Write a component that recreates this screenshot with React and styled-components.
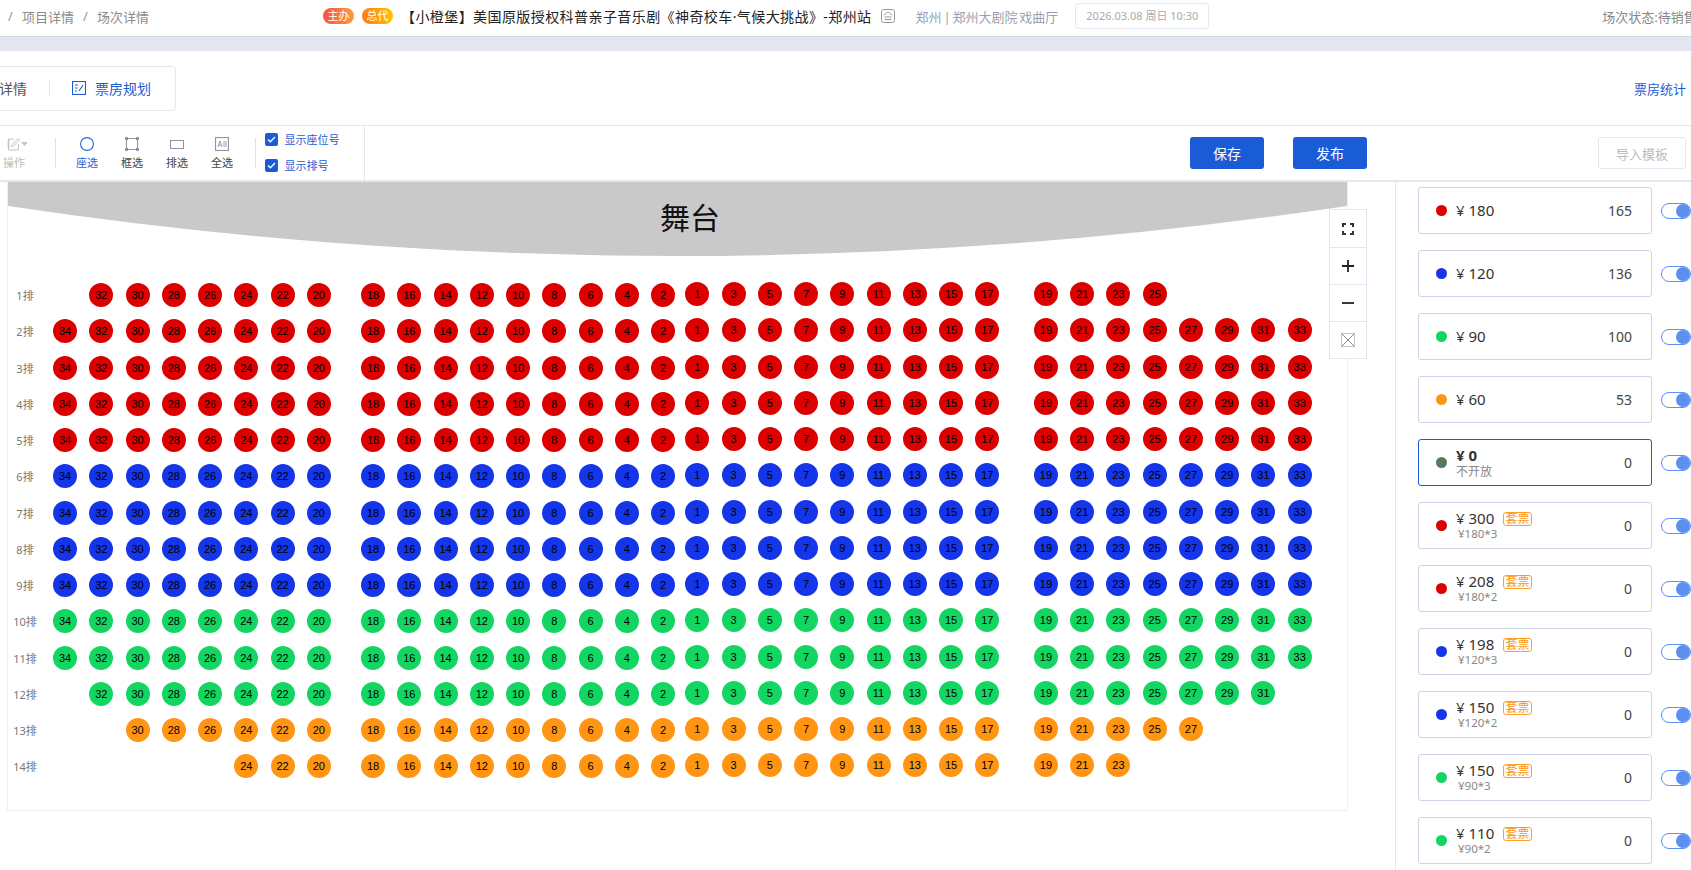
import React from 'react';
import styled, { createGlobalStyle } from 'styled-components';

const RED = '#dc0000';
const BLUE = '#1535e8';
const GREEN = '#13d662';
const ORANGE = '#ff9512';
const MUTED = '#567a60';
const PRIMARY = '#1a5cd6';
const LINE = '#e4e7f1';

const GlobalStyle = createGlobalStyle`
  html, body {
    margin: 0;
    padding: 0;
    background: #fff;
    overflow: hidden;
  }
  * { box-sizing: border-box; }
  body {
    font-family: "Noto Sans", "Noto Sans CJK SC", sans-serif;
    color: #333;
  }
`;

const evens = (from, to) => {
  const out = [];
  for (let n = from; n >= to; n -= 2) out.push(n);
  return out;
};
const odds = (from, to) => {
  const out = [];
  for (let n = from; n <= to; n += 2) out.push(n);
  return out;
};

const rowColor = (row) => {
  if (row <= 5) return RED;
  if (row <= 9) return BLUE;
  if (row <= 12) return GREEN;
  return ORANGE;
};

// first seat of the left block and last seat of the right block, per row
const rows = [
  { no: 1, first: 32, last: 25 },
  { no: 2, first: 34, last: 33 },
  { no: 3, first: 34, last: 33 },
  { no: 4, first: 34, last: 33 },
  { no: 5, first: 34, last: 33 },
  { no: 6, first: 34, last: 33 },
  { no: 7, first: 34, last: 33 },
  { no: 8, first: 34, last: 33 },
  { no: 9, first: 34, last: 33 },
  { no: 10, first: 34, last: 33 },
  { no: 11, first: 34, last: 33 },
  { no: 12, first: 32, last: 31 },
  { no: 13, first: 30, last: 27 },
  { no: 14, first: 24, last: 23 },
];

const prices = [
  { color: RED, price: '180', count: 165 },
  { color: BLUE, price: '120', count: 136 },
  { color: GREEN, price: '90', count: 100 },
  { color: ORANGE, price: '60', count: 53 },
  { color: MUTED, price: '0', count: 0, note: '不开放', active: true },
  { color: RED, price: '300', count: 0, pack: '¥180*3' },
  { color: RED, price: '208', count: 0, pack: '¥180*2' },
  { color: BLUE, price: '198', count: 0, pack: '¥120*3' },
  { color: BLUE, price: '150', count: 0, pack: '¥120*2' },
  { color: GREEN, price: '150', count: 0, pack: '¥90*3' },
  { color: GREEN, price: '110', count: 0, pack: '¥90*2' },
];

export default function App() {
  return (
    <Page>
      <GlobalStyle />
      <Header>
        <Crumbs>
          <Slash>/</Slash>
          <span>项目详情</span>
          <Slash>/</Slash>
          <span>场次详情</span>
        </Crumbs>
        <Badge $from="#f0553f" $to="#ff9a3c">主办</Badge>
        <Badge $from="#ff7a12" $to="#ffc400">总代</Badge>
        <Title>【小橙堡】美国原版授权科普亲子音乐剧《神奇校车·气候大挑战》-郑州站</Title>
        <PosterIcon viewBox="0 0 14 14">
          <rect x="0.5" y="0.5" width="13" height="13" rx="2" />
          <path d="M3 6l4-3 4 3M3.5 8h7M3.5 10.5h7" />
        </PosterIcon>
        <Venue>郑州 | 郑州大剧院 戏曲厅</Venue>
        <DateBox>2026.03.08 周日 10:30</DateBox>
        <Status>场次状态:待销售</Status>
      </Header>
      <Band />
      <TabBar>
        <TabCard>
          <TabPlain>详情</TabPlain>
          <TabDivider />
          <TabActive>
            <svg width="14" height="14" viewBox="0 0 14 14" fill="none" stroke={PRIMARY} strokeWidth="1.1">
              <rect x="0.5" y="0.5" width="13" height="13" />
              <path d="M3 4h3M3 7h2.5M3 10h2M7 10l4-6" />
            </svg>
            票房规划
          </TabActive>
        </TabCard>
        <StatLink>票房统计</StatLink>
      </TabBar>
      <Toolbar>
        <ToolSection>
          <OpTool>
            <svg width="26" height="14" viewBox="0 0 26 14" fill="none" stroke="#c4c4c4">
              <path d="M13 2H7.5v11h10V7M10 9l7-7.5 1.5 1.5-7 7zM6 4h3M6 7h3M6 10h3" />
              <path d="M21 5h7l-3.5 4z" fill="#c4c4c4" stroke="none" transform="translate(-1)" />
            </svg>
            <span>操作</span>
          </OpTool>
          <ToolDivider $left={27} />
          <Tool $active>
            <svg width="14" height="14" viewBox="0 0 14 14" fill="none" stroke="#2a62d8" strokeWidth="1.1">
              <circle cx="7" cy="7" r="6.4" />
            </svg>
            <span>座选</span>
          </Tool>
          <Tool>
            <svg width="14" height="14" viewBox="0 0 14 14" fill="none" stroke="#8f94a3">
              <rect x="1.5" y="1.5" width="11" height="11" />
              <path d="M0 0h3v3H0zM11 0h3v3h-3zM0 11h3v3H0zM11 11h3v3h-3z" fill="#8f94a3" stroke="none" />
            </svg>
            <span>框选</span>
          </Tool>
          <Tool>
            <svg width="14" height="14" viewBox="0 0 14 14" fill="none" stroke="#8f94a3">
              <rect x="0.5" y="3.5" width="13" height="8" />
            </svg>
            <span>排选</span>
          </Tool>
          <Tool>
            <svg width="14" height="14" viewBox="0 0 14 14" fill="none" stroke="#8f94a3">
              <rect x="0.5" y="0.5" width="13" height="13" strokeWidth="1.2" />
              <path d="M3 10l2-6 2 6M3.8 8h2.4M9 4v6M11 4v6" strokeWidth="0.9" />
            </svg>
            <span>全选</span>
          </Tool>
          <ToolDivider $left={10.5} />
          <Checks>
            <CheckRow>
              <CheckBox>
                <svg width="9" height="7" viewBox="0 0 9 7" fill="none" stroke="#fff" strokeWidth="1.3">
                  <path d="M1 3.5l2.3 2.3L8 1" />
                </svg>
              </CheckBox>
              显示座位号
            </CheckRow>
            <CheckRow>
              <CheckBox>
                <svg width="9" height="7" viewBox="0 0 9 7" fill="none" stroke="#fff" strokeWidth="1.3">
                  <path d="M1 3.5l2.3 2.3L8 1" />
                </svg>
              </CheckBox>
              显示排号
            </CheckRow>
          </Checks>
        </ToolSection>
        <SaveButton>保存</SaveButton>
        <PublishButton>发布</PublishButton>
        <ImportButton>导入模板</ImportButton>
      </Toolbar>
      <Body>
        <Main>
          <Hall>
            <Stage>
              <StageShape viewBox="0 0 1339 74" preserveAspectRatio="none">
                <path d="M0 0H1339V24Q669.5 124 0 24Z" fill="#c9c9c9" />
              </StageShape>
              <StageName>舞台</StageName>
            </Stage>
            <ZoomTools>
              <ZoomCell>
                <svg width="12" height="12" viewBox="0 0 12 12" fill="none" stroke="#333" strokeWidth="2">
                  <path d="M1 4V1h3M8 1h3v3M11 8v3H8M4 11H1V8" />
                </svg>
              </ZoomCell>
              <ZoomCell>
                <svg width="12" height="12" viewBox="0 0 12 12" fill="none" stroke="#222" strokeWidth="1.8">
                  <path d="M0 6h12M6 0v12" />
                </svg>
              </ZoomCell>
              <ZoomCell>
                <svg width="12" height="12" viewBox="0 0 12 12" fill="none" stroke="#222" strokeWidth="1.8">
                  <path d="M0 6h12" />
                </svg>
              </ZoomCell>
              <ZoomCell>
                <svg width="14" height="14" viewBox="0 0 14 14" fill="none" stroke="#888">
                  <rect x="0.5" y="0.5" width="13" height="13" strokeDasharray="1 1" />
                  <path d="M1 1l12 12M13 1L1 13" />
                </svg>
              </ZoomCell>
            </ZoomTools>
            <SeatMap>
              {rows.map((r) => {
                const color = rowColor(r.no);
                return (
                  <Row key={r.no}>
                    <RowLabel>{r.no}排</RowLabel>
                    <LeftWing>
                      {evens(34, 20).map((n) => (
                        <Cell key={n}>{n <= r.first && <Seat $color={color}>{n}</Seat>}</Cell>
                      ))}
                    </LeftWing>
                    <CenterLeft>
                      {evens(18, 2).map((n) => (
                        <Cell key={n}><Seat $color={color}>{n}</Seat></Cell>
                      ))}
                    </CenterLeft>
                    <CenterRight>
                      {odds(1, 17).map((n) => (
                        <Cell key={n}><Seat $color={color}>{n}</Seat></Cell>
                      ))}
                    </CenterRight>
                    <RightWing>
                      {odds(19, 33).map((n) => (
                        <Cell key={n}>{n <= r.last && <Seat $color={color}>{n}</Seat>}</Cell>
                      ))}
                    </RightWing>
                  </Row>
                );
              })}
            </SeatMap>
          </Hall>
        </Main>
        <PricePanel>
          {prices.map((p, i) => (
            <PriceRow key={i}>
              <PriceCard $active={p.active}>
                <Dot $color={p.color} />
                <PriceInfo>
                  <PriceLine>
                    <PriceValue $bold={p.active}>¥ {p.price}</PriceValue>
                    {p.pack && <PackTag>套票</PackTag>}
                  </PriceLine>
                  {p.note && <PriceNote>{p.note}</PriceNote>}
                  {p.pack && <PackNote>{p.pack}</PackNote>}
                </PriceInfo>
                <PriceCount>{p.count}</PriceCount>
              </PriceCard>
              <Toggle><Knob /></Toggle>
            </PriceRow>
          ))}
        </PricePanel>
      </Body>
    </Page>
  );
}

const Page = styled.div`
  width: 1691px;
  height: 870px;
  overflow: hidden;
  display: flex;
  flex-direction: column;
`;

const Header = styled.div`
  height: 37px;
  flex-shrink: 0;
  display: flex;
  align-items: center;
  padding: 0 0 4px 8px;
  border-bottom: 1px solid #d5d9e7;
  white-space: nowrap;
  & > * {
    flex-shrink: 0;
  }
`;

const Crumbs = styled.div`
  width: 315px;
  display: flex;
  align-items: center;
  font-size: 13px;
  color: #8a8a8a;
`;

const Slash = styled.span`
  width: 14px;
  margin-right: 0;
  color: #999;
  &:nth-child(3) {
    margin-left: 9px;
  }
`;

const Badge = styled.span`
  width: 31px;
  height: 16px;
  margin-right: 8px;
  border-radius: 8px;
  background: linear-gradient(90deg, ${(p) => p.$from}, ${(p) => p.$to});
  color: #fff;
  font-size: 11px;
  line-height: 16px;
  text-align: center;
`;

const Title = styled.span`
  font-size: 14px;
  letter-spacing: 0.42px;
  color: #222;
`;

const PosterIcon = styled.svg`
  width: 14px;
  height: 14px;
  margin-left: 9px;
  fill: none;
  stroke: #999;
  stroke-width: 1;
`;

const Venue = styled.span`
  margin-left: 21px;
  font-size: 13px;
  word-spacing: -1.5px;
  color: #9a9fb0;
`;

const DateBox = styled.div`
  width: 134px;
  height: 26px;
  margin-left: 17px;
  border: 1px solid ${LINE};
  border-radius: 3px;
  font-size: 11px;
  line-height: 24px;
  text-align: center;
  color: #aaa;
`;

const Status = styled.span`
  margin-left: 393px;
  font-size: 13px;
  color: #888;
`;

const Band = styled.div`
  height: 14px;
  flex-shrink: 0;
  background: #e4e7f1;
`;

const TabBar = styled.div`
  height: 74px;
  flex-shrink: 0;
  display: flex;
  align-items: center;
  justify-content: space-between;
  padding-right: 5px;
`;

const TabCard = styled.div`
  width: 206px;
  height: 45px;
  margin-left: -30px;
  padding-left: 28px;
  display: flex;
  align-items: center;
  border: 1px solid ${LINE};
  border-radius: 4px;
`;

const TabPlain = styled.span`
  font-size: 14px;
  color: #555;
`;

const TabDivider = styled.span`
  width: 1px;
  height: 16px;
  margin-left: 22px;
  background: ${LINE};
`;

const TabActive = styled.span`
  margin-left: 22px;
  display: flex;
  align-items: center;
  gap: 9px;
  font-size: 14px;
  color: ${PRIMARY};
`;

const StatLink = styled.span`
  font-size: 13px;
  color: ${PRIMARY};
`;

const Toolbar = styled.div`
  height: 57px;
  flex-shrink: 0;
  display: flex;
  align-items: center;
  padding-right: 5px;
  border-top: 1px solid ${LINE};
  border-bottom: 2px solid ${LINE};
`;

const ToolSection = styled.div`
  width: 365px;
  height: 100%;
  flex-shrink: 0;
  display: flex;
  align-items: center;
  border-right: 1px solid ${LINE};
`;

const OpTool = styled.div`
  width: 28px;
  display: flex;
  flex-direction: column;
  align-items: center;
  gap: 4px;
  font-size: 11px;
  line-height: 15px;
  color: #bbb;
`;

const Tool = styled.div`
  width: 45px;
  display: flex;
  flex-direction: column;
  align-items: center;
  gap: 4px;
  font-size: 11px;
  line-height: 15px;
  color: ${(p) => (p.$active ? '#2a62d8' : '#444')};
`;

const ToolDivider = styled.span`
  width: 1px;
  height: 30px;
  margin-left: ${(p) => p.$left}px;
  margin-right: 8.5px;
  background: #dfe1e8;
`;

const Checks = styled.div`
  display: flex;
  flex-direction: column;
  gap: 12px;
  margin-top: -2px;
`;

const CheckRow = styled.label`
  display: flex;
  align-items: center;
  gap: 7px;
  height: 14px;
  font-size: 11px;
  color: ${PRIMARY};
`;

const CheckBox = styled.span`
  width: 13px;
  height: 13px;
  display: flex;
  align-items: center;
  justify-content: center;
  border-radius: 2px;
  background: ${PRIMARY};
`;

const SaveButton = styled.button`
  width: 74px;
  height: 32px;
  margin-left: 825px;
  border: none;
  border-radius: 3px;
  background: ${PRIMARY};
  color: #fff;
  font: inherit;
  font-size: 14px;
`;

const PublishButton = styled(SaveButton)`
  margin-left: 29px;
`;

const ImportButton = styled.button`
  width: 88px;
  height: 32px;
  margin-left: auto;
  border: 1px solid ${LINE};
  border-radius: 3px;
  background: #fff;
  color: #bbb;
  font: inherit;
  font-size: 13px;
`;

const Body = styled.div`
  flex: 1;
  min-height: 0;
  display: flex;
`;

const Main = styled.div`
  width: 1395px;
  flex-shrink: 0;
  padding-left: 7px;
`;

const Hall = styled.div`
  position: relative;
  width: 1341px;
  height: 629px;
  border: 1px solid #f0f0f0;
  border-top: none;
`;

const Stage = styled.div`
  position: relative;
  height: 74px;
  display: flex;
  justify-content: center;
  padding: 14px 0 0 25px;
`;

const StageShape = styled.svg`
  position: absolute;
  left: 0;
  top: 0;
  width: 1339px;
  height: 74px;
`;

const StageName = styled.span`
  position: relative;
  font-size: 30px;
  line-height: 44px;
  color: #111;
`;

const ZoomTools = styled.div`
  position: absolute;
  left: 1321px;
  top: 27px;
  width: 38px;
  display: flex;
  flex-direction: column;
  background: #fff;
  border: 1px solid ${LINE};
`;

const ZoomCell = styled.div`
  height: 37px;
  display: flex;
  align-items: center;
  justify-content: center;
  & + & {
    border-top: 1px solid ${LINE};
  }
`;

const SeatMap = styled.div`
  margin-top: 21px;
  display: flex;
  flex-direction: column;
`;

const Row = styled.div`
  height: 36.25px;
  display: flex;
  align-items: center;
`;

const RowLabel = styled.div`
  width: 34px;
  margin-right: 4.875px;
  flex-shrink: 0;
  font-size: 11px;
  text-align: center;
  color: #777;
`;

const LeftWing = styled.div`
  display: flex;
  flex-shrink: 0;
`;

const CenterLeft = styled(LeftWing)`
  margin-left: 18px;
`;

const CenterRight = styled(LeftWing)`
  margin-left: -2px;
  margin-top: -2px;
`;

const RightWing = styled(LeftWing)`
  margin-left: 22.4px;
  margin-top: -2px;
`;

const Cell = styled.div`
  width: 36.25px;
  height: 24px;
  display: flex;
  justify-content: center;
`;

const Seat = styled.div`
  width: 24px;
  height: 24px;
  border-radius: 50%;
  background: ${(p) => p.$color};
  color: #000;
  font-family: "Liberation Sans", sans-serif;
  font-size: 11px;
  line-height: 24px;
  text-align: center;
`;

const PricePanel = styled.div`
  flex: 1;
  display: flex;
  flex-direction: column;
  gap: 16px;
  padding: 5px 0 0 22px;
  border-left: 1px solid ${LINE};
`;

const PriceRow = styled.div`
  display: flex;
  align-items: center;
  gap: 9px;
  flex-shrink: 0;
`;

const PriceCard = styled.div`
  width: 234px;
  height: 47px;
  flex-shrink: 0;
  display: flex;
  align-items: center;
  padding: 0 19px 0 17px;
  border: 1px solid ${(p) => (p.$active ? PRIMARY : '#cfd3e3')};
  border-radius: 3px;
`;

const Dot = styled.span`
  width: 11px;
  height: 11px;
  flex-shrink: 0;
  border-radius: 50%;
  background: ${(p) => p.$color};
`;

const PriceInfo = styled.div`
  margin-left: 9px;
  flex: 1;
  display: flex;
  flex-direction: column;
`;

const PriceLine = styled.div`
  display: flex;
  align-items: center;
  height: 18px;
  margin-top: -1px;
  &:only-child {
    margin-top: -2px;
  }
`;

const PriceValue = styled.span`
  width: 47px;
  font-size: 15px;
  font-weight: ${(p) => (p.$bold ? 700 : 400)};
  color: #333;
`;

const PackTag = styled.span`
  width: 29px;
  height: 14px;
  margin-top: 1px;
  border: 1px solid #ff9f2e;
  border-radius: 3px;
  font-size: 12px;
  line-height: 12px;
  text-align: center;
  color: #ff9512;
`;

const PriceNote = styled.span`
  font-size: 12px;
  line-height: 15px;
  color: #888;
`;

const PackNote = styled(PriceNote)`
  margin-left: 2px;
  font-size: 11.5px;
  line-height: 14px;
`;

const PriceCount = styled.span`
  font-size: 14px;
  color: #444;
`;

const Toggle = styled.div`
  width: 30px;
  height: 16px;
  flex-shrink: 0;
  display: flex;
  justify-content: flex-end;
  border: 1px solid #5b8ff0;
  border-radius: 8px;
`;

const Knob = styled.span`
  width: 14px;
  height: 14px;
  border-radius: 50%;
  background: #5b8ff0;
`;
